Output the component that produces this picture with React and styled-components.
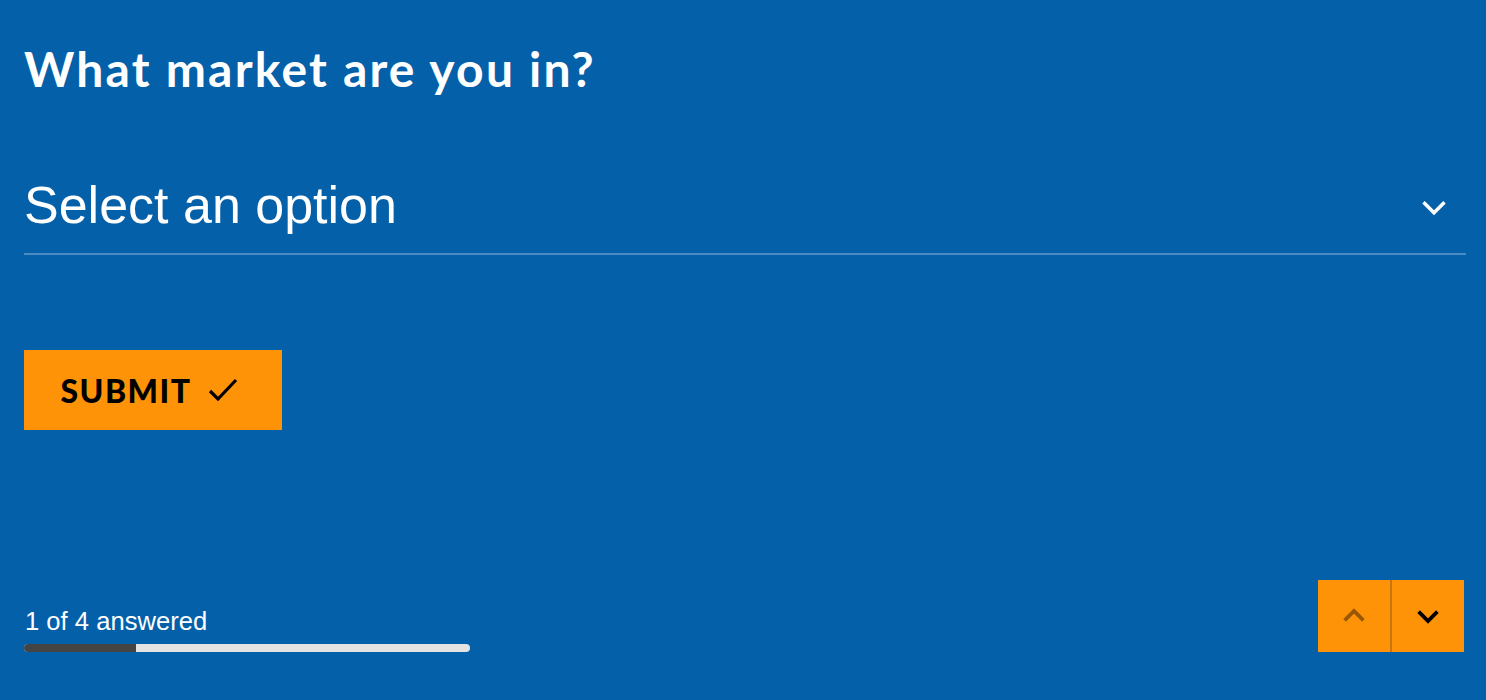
import React from "react";
import styled, { createGlobalStyle } from "styled-components";

const GlobalStyle = createGlobalStyle`
    html, body {
        margin: 0;
        padding: 0;
        background: #0560aa;
    }
    body {
        font-family: "Liberation Sans", Arial, sans-serif;
        color: #fff;
    }
`;

const Page = styled.div`
    box-sizing: border-box;
    height: 700px;
    padding: 0 20px 0 24px;
    display: flex;
    flex-direction: column;
    background: #0560aa;
`;

const Question = styled.h1`
    margin: 37px 0 0;
    font-family: "Lato", sans-serif;
    font-weight: 700;
    font-size: 48px;
    line-height: 64px;
    letter-spacing: 2.2px;
`;

const SelectBox = styled.div`
    margin-top: 60px;
    height: 94px;
    display: flex;
    align-items: center;
    justify-content: space-between;
    border-bottom: 2px solid rgba(255, 255, 255, 0.28);
    box-sizing: border-box;
`;

const SelectText = styled.span`
    font-size: 52px;
    line-height: 60px;
    margin-top: -4px;
`;

const Chevron = styled.svg`
    width: ${p => p.size}px;
    height: ${p => p.size}px;
    flex-shrink: 0;
    opacity: ${p => (p.dim ? 0.4 : 1)};
`;

const SubmitButton = styled.button`
    margin-top: 95px;
    align-self: flex-start;
    width: 258px;
    height: 80px;
    border: none;
    background: #ff9308;
    color: #000;
    display: flex;
    align-items: center;
    justify-content: center;
    gap: 16px;
    font-family: "Lato", sans-serif;
    font-weight: 900;
    font-size: 32px;
    letter-spacing: 1.5px;
    padding: 0 8px 0 0;
`;

const Footer = styled.div`
    margin-top: auto;
    margin-bottom: 48px;
    display: flex;
    align-items: flex-end;
    justify-content: space-between;
`;

const Progress = styled.div`
    display: flex;
    flex-direction: column;
    gap: 8px;
`;

const ProgressLabel = styled.span`
    font-size: 25.6px;
    line-height: 30px;
    margin-left: 1px;
`;

const Track = styled.div`
    width: 446px;
    height: 8px;
    border-radius: 4px;
    background: #e4e4e4;
    overflow: hidden;
`;

const Fill = styled.div`
    height: 100%;
    background: #444;
`;

const NavGroup = styled.div`
    display: flex;
    margin-right: 2px;
`;

const NavButton = styled.button`
    width: 72px;
    height: 72px;
    border: none;
    padding: 0;
    background: #ff9308;
    display: flex;
    align-items: center;
    justify-content: center;
    & + & {
        border-left: 2px solid #c87412;
        width: 74px;
    }
`;

const ChevronDown = ({ size, color, dim }) => (
    <Chevron size={size} dim={dim} viewBox="0 0 24 24" fill="none">
        <path d="M4.5 8.5 L12 16 L19.5 8.5" stroke={color} strokeWidth="3" />
    </Chevron>
);

const ChevronUp = ({ size, color, dim }) => (
    <Chevron size={size} dim={dim} viewBox="0 0 24 24" fill="none">
        <path d="M4.5 15.5 L12 8 L19.5 15.5" stroke={color} strokeWidth="3" />
    </Chevron>
);

const App = () => {
    const answered = 1;
    const total = 4;

    return (
        <Page>
            <GlobalStyle />
            <Question>What market are you in?</Question>
            <SelectBox>
                <SelectText>Select an option</SelectText>
                <Chevron size={28} viewBox="0 0 24 24" fill="none" style={{ marginRight: 18 }}>
                    <path d="M3 8 L12 17 L21 8" stroke="#fff" strokeWidth="3" />
                </Chevron>
            </SelectBox>
            <SubmitButton>
                SUBMIT
                <svg width="30" height="26" viewBox="0 0 30 26" fill="none">
                    <path d="M2 14 L10 22 L28 3" stroke="#000" strokeWidth="3.2" />
                </svg>
            </SubmitButton>
            <Footer>
                <Progress>
                    <ProgressLabel>{answered} of {total} answered</ProgressLabel>
                    <Track>
                        <Fill style={{ width: `${(answered / total) * 100}%` }} />
                    </Track>
                </Progress>
                <NavGroup>
                    <NavButton>
                        <ChevronUp size={30} color="#000" dim />
                    </NavButton>
                    <NavButton>
                        <ChevronDown size={30} color="#000" />
                    </NavButton>
                </NavGroup>
            </Footer>
        </Page>
    );
};

export default App;
